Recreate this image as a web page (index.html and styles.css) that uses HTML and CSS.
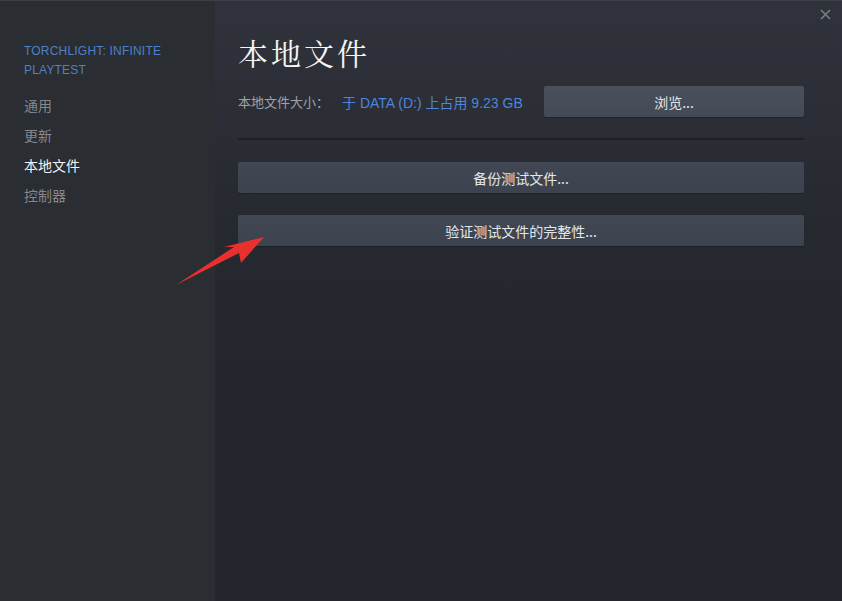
FILE: index.html
```html
<!DOCTYPE html>
<html lang="zh-CN">
<head>
    <meta charset="UTF-8" />
    <title>属性 - 本地文件</title>
    <link rel="stylesheet" href="styles.css">
</head>
<body>
<div class="window">
    <aside class="sidebar">
        <div class="game-title">TORCHLIGHT: INFINITE PLAYTEST</div>
        <ul class="nav">
            <li>通用</li>
            <li>更新</li>
            <li class="active">本地文件</li>
            <li>控制器</li>
        </ul>
    </aside>

    <main class="content">
        <h1>本地文件</h1>

        <div class="size-row">
            <span class="label">本地文件大小：</span>
            <span class="value">于 DATA (D:) 上占用 9.23 GB</span>
            <button class="btn browse">浏览...</button>
        </div>

        <div class="divider"></div>

        <button class="btn wide">备份测试文件...</button>
        <button class="btn wide">验证测试文件的完整性...</button>
    </main>

    <svg class="close" width="11" height="11" viewBox="0 0 11 11">
        <path d="M1 1 L10 10 M10 1 L1 10" stroke="#7a7e85" stroke-width="1.6" />
    </svg>

    <svg class="arrow" width="842" height="601" viewBox="0 0 842 601">
        <polygon points="176,284 234,246 224,246 264,236 241,262 239,252" fill="#e8312e" />
    </svg>
</div>
</body>
</html>
```

FILE: styles.css
```css
* {
    box-sizing: border-box;
}

html, body {
    margin: 0;
    padding: 0;
    background-color: #23262d;
}

body {
    font-family: "Liberation Sans", "Noto Sans CJK SC", sans-serif;
    color: #dfe1e4;
}

.window {
    position: relative;
    display: flex;
    width: 842px;
    height: 601px;
    border-top: 1px solid #3c3f46;
    overflow: hidden;
}

/* left column */
.sidebar {
    width: 215px;
    flex-shrink: 0;
    background-color: #2a2d32;
    padding: 41px 20px 0 24px;
}

.game-title {
    font-size: 12px;
    line-height: 19px;
    color: #4f80c9;
    letter-spacing: 0.2px;
}

.nav {
    list-style: none;
    margin: 10px 0 0 0;
    padding: 0;
}

.nav li {
    font-family: "Noto Sans CJK SC", sans-serif;
    font-size: 14px;
    line-height: 30px;
    color: #85888e;
}

.nav li.active {
    color: #f2f3f4;
}

/* right column */
.content {
    flex: 1;
    display: flex;
    flex-direction: column;
    padding: 30px 38px 0 23px;
    background: linear-gradient(to bottom, #30333b 0px, #262930 220px, #23262d 400px);
}

h1 {
    margin: 0;
    font-family: "Noto Serif CJK SC", "Noto Sans CJK SC", serif;
    font-weight: 400;
    font-size: 30px;
    line-height: 42px;
    letter-spacing: 3px;
    color: #f4f5f6;
}

.size-row {
    display: flex;
    align-items: center;
    margin-top: 13px;
    font-size: 13px;
}

.size-row .label {
    font-family: "Noto Sans CJK SC", sans-serif;
    color: #9fa2a8;
    width: 104px;
}

.size-row .value {
    font-family: "Liberation Sans", "Noto Sans CJK SC", sans-serif;
    color: #4b86df;
    font-size: 14px;
}

.btn {
    display: block;
    height: 31px;
    border: none;
    border-radius: 2px;
    background: linear-gradient(to bottom, #414854, #3c434f);
    color: #e4e6e8;
    font-family: "Noto Sans CJK SC", sans-serif;
    font-size: 14px;
    padding: 0;
    box-shadow: 0 1px 1px rgba(0, 0, 0, 0.2);
}

.btn.browse {
    width: 260px;
    margin-left: auto;
    background: linear-gradient(to bottom, #4a515d, #434a56);
}

.divider {
    height: 2px;
    margin-top: 21px;
    background-color: #1c1f24;
}

.btn.wide {
    width: 100%;
    margin-top: 22px;
}

.close {
    position: absolute;
    top: 8px;
    right: 11px;
}

.arrow {
    position: absolute;
    left: 0;
    top: 0;
    pointer-events: none;
}
```
